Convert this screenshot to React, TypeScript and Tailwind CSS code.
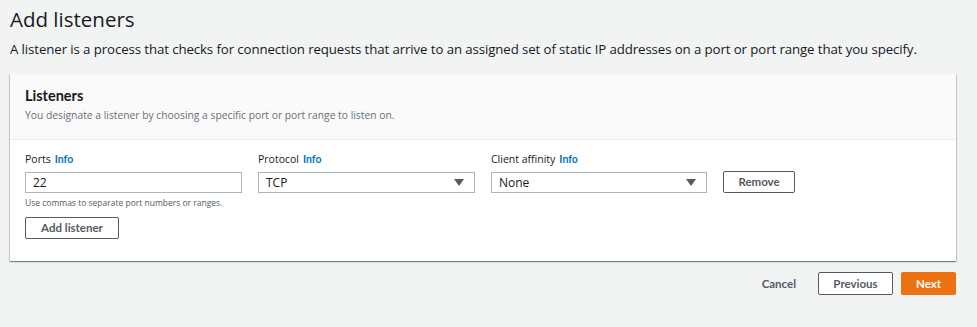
import React from 'react';

const bold = { fontFamily: 'Lato, "Open Sans", sans-serif' };

function Info() {
  return (
    <span className="font-bold text-[#0073bb] ml-[4px]" style={bold}>
      Info
    </span>
  );
}

function Caret() {
  return (
    <svg width="10" height="7" viewBox="0 0 10 7" className="text-[#545b64]">
      <path d="M0 0h10L5 7z" fill="currentColor" />
    </svg>
  );
}

function SelectBox({ value }: { value: string }) {
  return (
    <div className="flex items-center justify-between h-[21px] border border-[#aab7b8] bg-white pl-[7px] pr-[10px] text-[12px] text-[#16191f]">
      <span>{value}</span>
      <Caret />
    </div>
  );
}

function Button({ children, className = '' }: { children: React.ReactNode; className?: string }) {
  return (
    <button
      className={
        'block h-[22px] border border-[#545b64] bg-white rounded-[2px] text-[11.5px] font-bold text-[#545b64] ' +
        className
      }
      style={bold}
    >
      {children}
    </button>
  );
}

export default function App() {
  return (
    <div
      className="min-h-screen bg-[#f2f3f3] pl-[10px] pr-[21px] pt-[5px] text-[#16191f]"
      style={{ fontFamily: '"Open Sans", "Noto Sans", sans-serif' }}
    >
      <h1 className="text-[20.5px] leading-[28px] text-[#16191f]">Add listeners</h1>
      <p className="mt-[8px] text-[13.25px] leading-[16px] tracking-[-0.1px]">
        A listener is a process that checks for connection requests that arrive to an assigned set of static IP
        addresses on a port or port range that you specify.
      </p>

      <div className="mt-[17px] bg-white shadow-[0_1px_1px_0_rgba(0,28,36,0.3),1px_1px_1px_0_rgba(0,28,36,0.15),-1px_1px_1px_0_rgba(0,28,36,0.15)]">
        <div className="bg-[#fafafa] border-b border-[#eaeded] px-[15px] pt-[13px] h-[66px]">
          <h2 className="text-[14.5px] leading-[18px] font-bold" style={bold}>
            Listeners
          </h2>
          <p className="mt-[3px] text-[10.3px] leading-[15px] text-[#687078]">
            You designate a listener by choosing a specific port or port range to listen on.
          </p>
        </div>

        <div className="px-[15px] pt-[11px] pb-[22px]">
          <div className="flex items-start gap-[16px]">
            <div className="w-[217px]">
              <div className="text-[10.5px] leading-[16px] mb-[5px]">
                Ports<Info />
              </div>
              <div className="h-[21px] border border-[#aab7b8] bg-white pl-[7px] flex items-center text-[12px]">
                22
              </div>
              <div className="mt-[4px] text-[8.5px] leading-[12px] text-[#545b64]">
                Use commas to separate port numbers or ranges.
              </div>
            </div>
            <div className="w-[217px]">
              <div className="text-[10.5px] leading-[16px] mb-[5px]">
                Protocol<Info />
              </div>
              <SelectBox value="TCP" />
            </div>
            <div className="w-[216px]">
              <div className="text-[10.5px] leading-[16px] mb-[5px]">
                Client affinity<Info />
              </div>
              <SelectBox value="None" />
            </div>
            <div className="pt-[20px]">
              <Button className="w-[72px]">Remove</Button>
            </div>
          </div>
          <Button className="mt-[8px] w-[94px]">Add listener</Button>
        </div>
      </div>

      <div className="flex justify-end items-center mt-[11px]">
        <span className="text-[11.5px] font-bold text-[#545b64] mr-[22px]" style={bold}>
          Cancel
        </span>
        <Button className="w-[75px] h-[23px]">Previous</Button>
        <button
          className="block ml-[8px] w-[55px] h-[23px] bg-[#ec7211] rounded-[2px] text-[11.5px] font-bold text-white"
          style={bold}
        >
          Next
        </button>
      </div>
    </div>
  );
}
